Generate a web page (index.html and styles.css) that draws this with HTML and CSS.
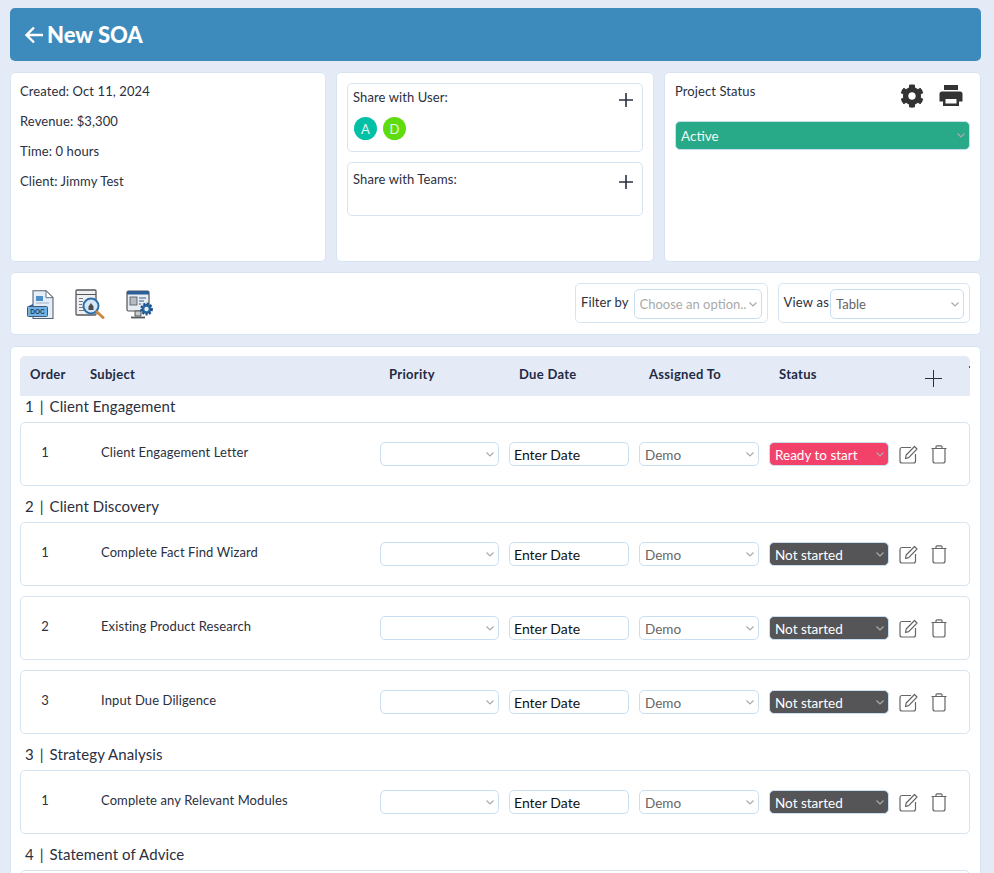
FILE: index.html
```html
<!DOCTYPE html>
<html lang="en">
<head>
<meta charset="utf-8">
<title>New SOA</title>
<link rel="stylesheet" href="styles.css">
</head>
<body>
<svg class="defs" width="0" height="0" aria-hidden="true">
  <symbol id="i-edit" viewBox="0 0 20 20"><path d="M13 3.500H4a2 2 0 0 0-2 2V17a2 2 0 0 0 2 2h11.500a2 2 0 0 0 2-2v-7" fill="none" stroke="#666" stroke-width="1.200"/><path d="M7.500 14.500l.7-3.500L16.500 2.500l2.500 2.500-8.300 8.600z" fill="none" stroke="#666" stroke-width="1.200" stroke-linejoin="round"/></symbol>
  <symbol id="i-trash" viewBox="0 0 20 20"><path d="M2.500 4.500h15M7 4.500V2.800a1 1 0 0 1 1-1h4a1 1 0 0 1 1 1v1.700M4 4.500V17a2 2 0 0 0 2 2h8a2 2 0 0 0 2-2V4.500" fill="none" stroke="#666" stroke-width="1.200"/></symbol>
  <symbol id="i-plus" viewBox="0 0 16 16"><path d="M8 1v14M1 8h14" stroke="#2b2f40" stroke-width="1.600"/></symbol>
</svg>

<header class="page-head">
  <svg class="back" viewBox="0 0 20 20" width="20" height="20"><path d="M19 10H2.500M10 2.500 2.500 10l7.500 7.500" fill="none" stroke="#fff" stroke-width="2.400"/></svg>
  <h1>New SOA</h1>
</header>

<section class="summary">
  <div class="card info">
    <p>Created: Oct 11, 2024</p>
    <p>Revenue: $3,300</p>
    <p>Time: 0 hours</p>
    <p>Client: Jimmy Test</p>
  </div>
  <div class="card share">
    <div class="share-box users">
      <div class="share-top"><span>Share with User:</span><svg class="plus" width="16" height="16"><use href="#i-plus"/></svg></div>
      <div class="avatars"><span class="avatar teal">A</span><span class="avatar green">D</span></div>
    </div>
    <div class="share-box teams">
      <div class="share-top"><span>Share with Teams:</span><svg class="plus" width="16" height="16"><use href="#i-plus"/></svg></div>
    </div>
  </div>
  <div class="card status">
    <div class="status-top">
      <span>Project Status</span>
      <div class="status-icons">
        <svg viewBox="0 0 512 512" width="24" height="24"><path fill="#333" d="M487.4 315.7l-42.6-24.6c4.3-23.2 4.3-47 0-70.2l42.6-24.6c4.9-2.8 7.1-8.6 5.5-14-11.1-35.6-30-67.8-54.7-94.6-3.8-4.1-10-5.1-14.8-2.3L380.8 110c-17.9-15.4-38.5-27.3-60.8-35.1V25.8c0-5.6-3.9-10.5-9.4-11.7-36.7-8.2-74.3-7.8-109.2 0-5.5 1.2-9.4 6.1-9.4 11.7V75c-22.2 7.9-42.8 19.8-60.8 35.1L88.7 85.5c-4.9-2.8-11-1.9-14.8 2.3-24.7 26.7-43.6 58.9-54.7 94.6-1.7 5.4.6 11.2 5.5 14L67.3 221c-4.3 23.2-4.3 47 0 70.2l-42.6 24.6c-4.9 2.8-7.1 8.6-5.5 14 11.1 35.6 30 67.8 54.7 94.6 3.8 4.1 10 5.1 14.8 2.3l42.6-24.6c17.9 15.4 38.5 27.3 60.8 35.1v49.2c0 5.6 3.9 10.5 9.4 11.7 36.7 8.2 74.3 7.8 109.2 0 5.5-1.2 9.4-6.1 9.4-11.7v-49.2c22.2-7.9 42.8-19.8 60.8-35.1l42.6 24.6c4.9 2.8 11 1.9 14.8-2.3 24.7-26.7 43.6-58.9 54.7-94.6 1.5-5.5-.7-11.3-5.6-14.1zM256 336c-44.1 0-80-35.9-80-80s35.9-80 80-80 80 35.9 80 80-35.9 80-80 80z"/></svg>
        <svg viewBox="0 0 24 24" width="24" height="24"><path fill="#333" fill-rule="evenodd" d="M5 1h14v5H5zM3 7.500h18a2.500 2.500 0 0 1 2.500 2.500v7.500H20V22H4v-4.500H.5V10A2.500 2.500 0 0 1 3 7.500zM6.500 15v4.500h11V15z"/></svg>
      </div>
    </div>
    <select class="field active"><option>Active</option></select>
  </div>
</section>

<section class="card toolbar">
  <div class="doc-icons">
    <svg viewBox="0 0 28 30" width="28" height="30">
      <path d="M7 .700h13l7 7v20.800H7z" fill="#e3eef9" stroke="#5a6470" stroke-width="1.100"/>
      <path d="M20 .700v7h7z" fill="#fff" stroke="#5a6470" stroke-width=".9"/>
      <rect x="10" y="6" width="7" height="5" fill="#4d8fc9"/>
      <path d="M10 13h13" stroke="#9fb2c6"/>
      <path d="M1.500 16.500 7 14v2.500z" fill="#2f5f8c"/>
      <rect x="1.500" y="16.500" width="20" height="10" rx="1" fill="#6fb2e3" stroke="#3f5a75"/>
      <text x="11.500" y="24.200" class="doc-label">DOC</text>
    </svg>
    <svg class="mag" viewBox="0 0 30 30" width="30" height="30">
      <rect x="1" y="1" width="20" height="25" rx="1" fill="#eef0f2" stroke="#55585c" stroke-width="1.300"/>
      <path d="M1 5.500h20" stroke="#55585c"/>
      <path d="M4 9.500h4M4 12.500h4M4 15.500h3M4 18.500h4M4 21.500h7" stroke="#77797c" stroke-width="1.200"/>
      <circle cx="16" cy="17" r="7.500" fill="#d5e7f6" stroke="#2f6fa8" stroke-width="2"/>
      <path d="M13.500 21v-3.500l2.500-3.500 2.500 3.500V21z" fill="#4d4d4d"/>
      <path d="M22 23l6 5.500" stroke="#c98a45" stroke-width="3" stroke-linecap="round"/>
    </svg>
    <svg viewBox="0 0 28 30" width="28" height="30">
      <rect x="1" y="1" width="22" height="20" rx="1.500" fill="#e8edf2" stroke="#4f5358" stroke-width="1.200"/>
      <rect x="1" y="1" width="22" height="3.500" fill="#2d5f96"/>
      <rect x="4" y="7" width="7" height="8" fill="#b5bcc4" stroke="#4f5358" stroke-width=".8"/>
      <path d="M13 8h7M13 11h5M13 14h2" stroke="#6d8eb0" stroke-width="1.400"/>
      <path d="M9 21h6v5H9z" fill="#c8ccd0" stroke="#55585c"/>
      <path d="M5 27.500h14" stroke="#55585c" stroke-width="1.800"/>
      <circle cx="20.500" cy="19" r="5" fill="#2a6cab" stroke="#1f5288" stroke-width="2.800" stroke-dasharray="2 1.300"/>
      <circle cx="20.500" cy="19" r="2.200" fill="#e8edf2"/>
    </svg>
  </div>
  <div class="filters">
    <label class="filter"><span>Filter by</span><select class="field filter-by muted"><option>Choose an option..</option></select></label>
    <label class="filter view"><span>View as</span><select class="field view-as"><option>Table</option></select></label>
  </div>
</section>

<main class="card board">
  <div class="grid-row head">
    <span>Order</span><span>Subject</span><span>Priority</span><span>Due Date</span><span>Assigned To</span><span>Status</span>
    <svg class="head-plus" viewBox="0 0 17 17" width="17" height="17"><path d="M8.500 0v17M0 8.500h17" stroke="#2b2f40" stroke-width="1"/></svg>
  </div>

  <h2 class="group">1 <i>|</i> Client Engagement</h2>
  <div class="grid-row task">
    <span class="num">1</span><span class="subject">Client Engagement Letter</span>
    <select class="field"><option></option></select>
    <input class="field date" value="Enter Date">
    <select class="field"><option>Demo</option></select>
    <select class="field ready"><option>Ready to start</option></select>
    <div class="actions"><svg width="20" height="20"><use href="#i-edit"/></svg><svg width="20" height="20"><use href="#i-trash"/></svg></div>
  </div>

  <h2 class="group">2 <i>|</i> Client Discovery</h2>
  <div class="grid-row task">
    <span class="num">1</span><span class="subject">Complete Fact Find Wizard</span>
    <select class="field"><option></option></select>
    <input class="field date" value="Enter Date">
    <select class="field"><option>Demo</option></select>
    <select class="field notstarted"><option>Not started</option></select>
    <div class="actions"><svg width="20" height="20"><use href="#i-edit"/></svg><svg width="20" height="20"><use href="#i-trash"/></svg></div>
  </div>
  <div class="grid-row task">
    <span class="num">2</span><span class="subject">Existing Product Research</span>
    <select class="field"><option></option></select>
    <input class="field date" value="Enter Date">
    <select class="field"><option>Demo</option></select>
    <select class="field notstarted"><option>Not started</option></select>
    <div class="actions"><svg width="20" height="20"><use href="#i-edit"/></svg><svg width="20" height="20"><use href="#i-trash"/></svg></div>
  </div>
  <div class="grid-row task">
    <span class="num">3</span><span class="subject">Input Due Diligence</span>
    <select class="field"><option></option></select>
    <input class="field date" value="Enter Date">
    <select class="field"><option>Demo</option></select>
    <select class="field notstarted"><option>Not started</option></select>
    <div class="actions"><svg width="20" height="20"><use href="#i-edit"/></svg><svg width="20" height="20"><use href="#i-trash"/></svg></div>
  </div>

  <h2 class="group">3 <i>|</i> Strategy Analysis</h2>
  <div class="grid-row task">
    <span class="num">1</span><span class="subject">Complete any Relevant Modules</span>
    <select class="field"><option></option></select>
    <input class="field date" value="Enter Date">
    <select class="field"><option>Demo</option></select>
    <select class="field notstarted"><option>Not started</option></select>
    <div class="actions"><svg width="20" height="20"><use href="#i-edit"/></svg><svg width="20" height="20"><use href="#i-trash"/></svg></div>
  </div>

  <h2 class="group">4 <i>|</i> Statement of Advice</h2>
  <div class="grid-row task"></div>
</main>
</body>
</html>
```

FILE: styles.css
```css
* { box-sizing: border-box; }
html, body { height: 100%; overflow: hidden; }
body {
  margin: 0;
  padding: 8px 13px 0 10px;
  background: #e4ebf7;
  color: #2b3040;
  font: 13px/18px "Lato", "Noto Sans", sans-serif;
  letter-spacing: .1px;
}
.defs { position: absolute; }
.card {
  background: #fff;
  border: 1px solid #d7e5f3;
  border-radius: 5px;
}
.page-head {
  display: flex;
  align-items: center;
  gap: 3px;
  height: 53px;
  padding-left: 14px;
  background: #3c8bbc;
  border-radius: 5px;
  color: #fff;
}
.page-head h1 {
  margin: 0;
  font-size: 22px;
  line-height: 30px;
  font-weight: 900;
  letter-spacing: 0;
}
.summary {
  display: grid;
  grid-template-columns: 316px 318px 317px;
  gap: 10px;
  margin-top: 11px;
  height: 190px;
}
.info { padding: 0 9px; }
.info p { margin: 0; height: 30px; padding-top: 9px; }
.share { padding: 10px; }
.share-box {
  border: 1px solid #d7e5f3;
  border-radius: 5px;
  padding: 4px 5px;
}
.share-top { display: flex; justify-content: space-between; align-items: flex-start; padding-right: 3px; }
.share-top .plus { margin-top: 4px; }
.users { height: 69px; }
.teams { height: 54px; margin-top: 10px; padding-top: 7px; }
.avatars { display: flex; gap: 6px; margin-top: 9px; padding-left: 1px; }
.avatar {
  display: flex;
  align-items: center;
  justify-content: center;
  width: 23px;
  height: 23px;
  border-radius: 50%;
  color: #e6f7f2;
  font-size: 13px;
}
.teal { background: #00c0a5; }
.green { background: #5fdc0f; }
.status { padding: 0 10px; }
.status-top { display: flex; justify-content: space-between; height: 48px; padding-top: 9px; }
.status-icons { display: flex; gap: 15px; padding: 2px 7px 0 0; }
.field {
  display: block;
  width: 100%;
  height: 24px;
  margin: 0;
  padding: 0 14px 0 5px;
  border: 1px solid #c9dff1;
  border-radius: 5px;
  appearance: none;
  background: #fff url("data:image/svg+xml,%3Csvg xmlns='http://www.w3.org/2000/svg' width='8' height='5'%3E%3Cpath d='M.5.500 4 4 7.500.500' fill='none' stroke='%23aaa' stroke-width='1.200'/%3E%3C/svg%3E") no-repeat right 4px center;
  color: #666;
  font: 13.5px "Lato", "Noto Sans", sans-serif;
  outline: none;
}
.active { height: 29px; background-color: #28a987; color: #eefaf6; }
.toolbar {
  display: flex;
  justify-content: space-between;
  align-items: center;
  height: 63px;
  margin-top: 10px;
  padding: 0 10px 1px 15px;
}
.doc-icons { display: flex; gap: 21px; align-items: center; margin-top: 3px; }
.doc-icons .mag { margin-top: -2px; }
.doc-label { font: 700 6.5px "Liberation Sans", sans-serif; fill: #1f4060; text-anchor: middle; }
.filters { display: flex; gap: 10px; }
.filter {
  display: flex;
  gap: 5px;
  height: 40px;
  padding: 5px;
  border: 1px solid #d7e5f3;
  border-radius: 5px;
}
.filter span { padding-top: 4px; }
.filter .field { height: 30px; font-size: 13px; }
.filter-by { width: 128px; }
.muted { color: #aaa; }
.view { gap: 1px; }
.view span { letter-spacing: .2px; }
.view-as { width: 134px; }
.board {
  margin-top: 11px;
  padding: 9px 10px 0 9px;
  height: 600px;
}
.grid-row {
  display: grid;
  align-items: center;
}
.head {
  grid-template-columns: 60px 299px 130px 130px 130px 130px 1fr;
  position: relative;
  height: 40px;
  padding: 0 0 4px 10px;
  background: #e4ebf7;
  border-radius: 5px 5px 0 0;
  font-weight: 700;
  color: #1f2a44;
  letter-spacing: .3px;
}
.head-plus { margin: 8px 0 0 16px; }
.head::after {
  content: "";
  position: absolute;
  top: 10px;
  right: 0;
  width: 1px;
  height: 2px;
  background: #555;
}
.group {
  margin: 0;
  height: 26px;
  padding: 1px 0 0 5px;
  font-size: 15px;
  line-height: 18px;
  font-weight: 400;
}
.group i { font-style: normal; padding: 0 2px; }
.task {
  height: 64px;
  grid-template-columns: 70px 269px 119px 120px 120px 120px 1fr;
  column-gap: 10px;
  border: 1px solid #d7e5f3;
  border-radius: 5px;
  margin-bottom: 10px;
}
.task .field { padding-top: 2px; }
.task .date { padding: 0 4px; background: #fff; color: #111; font-size: 14px; }
.task .ready { background-color: #f2426a; color: #fff; }
.task .notstarted { background-color: #555558; color: #fff; }
.num { text-align: center; padding-right: 22px; margin-top: -4px; }
.subject { margin-top: -4px; }
.actions { display: flex; gap: 11px; margin-left: -1px; }
```
